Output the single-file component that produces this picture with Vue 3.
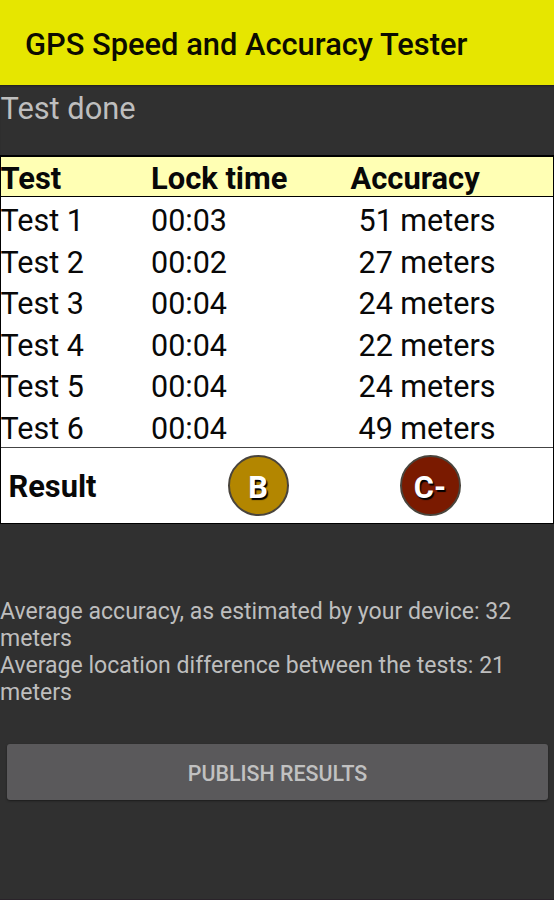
<script setup>
const rows = [
  ['Test 1', '00:03', '51 meters'],
  ['Test 2', '00:02', '27 meters'],
  ['Test 3', '00:04', '24 meters'],
  ['Test 4', '00:04', '22 meters'],
  ['Test 5', '00:04', '24 meters'],
  ['Test 6', '00:04', '49 meters'],
]
</script>

<template>
  <div class="screen">
    <header class="bar">GPS Speed and Accuracy Tester</header>
    <p class="status">Test done</p>
    <section class="table">
      <div class="row head"><span class="name">Test</span><span>Lock time</span><span>Accuracy</span></div>
      <div class="body">
        <div v-for="r in rows" :key="r[0]" class="row">
          <span class="name">{{ r[0] }}</span><span>{{ r[1] }}</span><span class="acc">{{ r[2] }}</span>
        </div>
      </div>
      <div class="result">
        <span class="label">Result</span>
        <span class="badge gold">B</span>
        <span class="badge red">C-</span>
      </div>
    </section>
    <section class="summary">
      <p>Average accuracy, as estimated by your device: 32 meters</p>
      <p>Average location difference between the tests: 21 meters</p>
    </section>
    <button class="publish">PUBLISH RESULTS</button>
    <div class="foot"></div>
  </div>
</template>

<style>
body { margin: 0; background: #303030; }
</style>

<style scoped>
.screen { width: 554px; height: 900px; display: flex; flex-direction: column; overflow: hidden; background: #303030; font-family: Roboto, sans-serif; color: #bebebe; }
p { margin: 0; }
.bar { box-sizing: border-box; height: 85px; padding: 3px 0 0 25px; line-height: 83px; background: #e6e600; color: #0c0c00; font-size: 30.85px; font-weight: 500; white-space: nowrap; flex: none; }
.status { height: 70px; padding-left: 0.5px; line-height: 47px; font-size: 30.8px; box-shadow: inset 0 2px 2px -1px #202020; flex: none; }
.table { box-sizing: border-box; height: 369px; border: 1px solid #000; border-top-width: 2px; background: #fff; color: #080808; font-size: 30.5px; flex: none; }
.row { display: grid; grid-template-columns: 150px 199.5px 1fr; height: 41.6px; line-height: 47px; white-space: nowrap; }
.head { box-sizing: border-box; height: 40px; line-height: 43px; border-bottom: 1px solid #000; background: #ffffb4; font-size: 30.9px; font-weight: 700; }
.name { margin-left: -0.5px; }
.acc { padding-left: 8px; }
.body { height: 250px; }
.result { box-sizing: border-box; height: 76px; border-top: 1px solid #444; display: flex; align-items: center; padding: 0 0 1px 7.5px; }
.label { width: 219px; font-size: 30.8px; font-weight: 700; padding-top: 3px; flex: none; }
.badge { box-sizing: border-box; width: 61px; height: 61px; border: 2px solid #49443c; border-radius: 50%; margin-right: 111px; line-height: 62px; text-align: center; color: #fff; font-size: 30.8px; font-weight: 700; text-shadow: 1.5px 1.5px 1px #000; flex: none; }
.gold { background: #b38600; }
.red { background: #7a1a00; margin-right: 0; }
.summary { height: 146px; padding-top: 74px; font-size: 23.06px; line-height: 27px; flex: none; }
.publish { width: 541px; height: 56px; margin: 0 0 0 7px; padding: 2px 0 0 0; border: 0; border-radius: 3px; background: #5a595b; color: #c1c1c1; font: 500 21.4px Roboto, sans-serif; box-shadow: 0 1px 2px #1c1c1c; flex: none; }
.foot { margin-top: auto; height: 1px; background: #2a232a; }
</style>
